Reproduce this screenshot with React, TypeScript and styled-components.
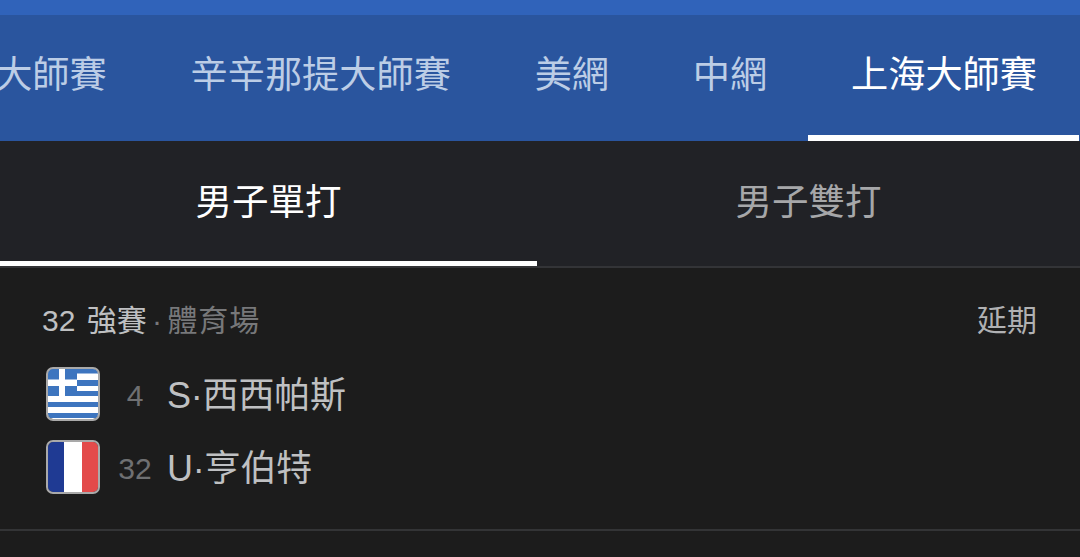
import React from "react";
import styled, { createGlobalStyle } from "styled-components";

const GlobalStyle = createGlobalStyle`
  html, body {
    margin: 0;
    padding: 0;
    background: #1c1c1e;
  }
  body {
    font-family: "Liberation Sans", "Noto Sans CJK TC", sans-serif;
    overflow: hidden;
  }
`;

const Page = styled.div`
  width: 1080px;
  height: 557px;
  overflow: hidden;
  background: #1c1c1c;
`;

const StatusStrip = styled.div`
  height: 15px;
  background: #3063ba;
`;

const TourNav = styled.nav`
  display: flex;
  justify-content: flex-end;
  height: 126px;
  padding-right: 1px;
  background: #2a559e;
  overflow: hidden;
`;

const TourTab = styled.div<{ $active?: boolean }>`
  flex: none;
  height: 126px;
  box-sizing: border-box;
  padding: 2px ${(p) => (p.$active ? "42px" : "40.3px")} 0 43.5px;
  display: flex;
  align-items: center;
  font-size: 37.2px;
  line-height: 1;
  color: ${(p) => (p.$active ? "#ffffff" : "#bccde6")};
  border-bottom: 6px solid ${(p) => (p.$active ? "#ffffff" : "transparent")};
`;

const DrawTabs = styled.div`
  display: grid;
  grid-template-columns: 537px 1fr;
  height: 127px;
  box-sizing: border-box;
  background: #212226;
  border-bottom: 2px solid #333437;
`;

const DrawTab = styled.div<{ $active?: boolean }>`
  height: 125px;
  box-sizing: border-box;
  padding-top: 4px;
  display: flex;
  align-items: center;
  justify-content: center;
  font-size: 36.5px;
  line-height: 1;
  color: ${(p) => (p.$active ? "#ffffff" : "#a6a7a9")};
  border-bottom: 5px solid ${(p) => (p.$active ? "#ffffff" : "transparent")};
`;

const MatchCard = styled.section`
  height: 263px;
  box-sizing: border-box;
  padding: 0 43px 0 42px;
  border-bottom: 2px solid #333436;
`;

const MatchHeader = styled.div`
  display: flex;
  justify-content: space-between;
  align-items: center;
  height: 99px;
  box-sizing: border-box;
  padding-top: 6px;
  font-size: 30px;
  line-height: 1;
`;

const RoundLabel = styled.div`
  color: #bfc0c2;
`;

const RoundCount = styled.span`
  margin-right: 3px;
`;

const Venue = styled.span`
  margin-left: -3px;
  word-spacing: -3px;
  color: #77787a;
`;

const VenueName = styled.span`
  letter-spacing: 0.9px;
`;

const Status = styled.div`
  color: #b0b1b3;
`;

const PlayerRows = styled.div`
  display: flex;
  flex-direction: column;
  gap: 19px;
`;

const PlayerRow = styled.div`
  display: flex;
  align-items: center;
  height: 54px;
  padding-left: 4px;
`;

const FlagFrame = styled.svg`
  flex: none;
  width: 54px;
  height: 54px;
  display: block;
`;

const Seed = styled.span`
  flex: none;
  width: 70px;
  margin: 4px -3px 0 0;
  text-align: center;
  font-size: 30px;
  line-height: 1;
  color: #6f7072;
`;

const PlayerName = styled.span`
  margin-top: 4px;
  font-size: 36px;
  line-height: 1;
  letter-spacing: -0.2px;
  color: #bfc0c2;
`;

const GreeceFlag = () => (
  <FlagFrame viewBox="0 0 54 54">
    <defs>
      <clipPath id="gr-clip">
        <rect x="2" y="2" width="50" height="50" rx="5" />
      </clipPath>
    </defs>
    <g clipPath="url(#gr-clip)">
      <rect width="54" height="54" fill="#fff" />
      <rect y="2" width="54" height="4.5" fill="#3d75bf" />
      <rect y="13" width="54" height="6" fill="#3d75bf" />
      <rect y="24" width="54" height="5" fill="#3d75bf" />
      <rect y="35" width="54" height="5" fill="#3d75bf" />
      <rect y="46" width="54" height="5" fill="#3d75bf" />
      <rect x="2" y="2" width="29" height="27" fill="#3d75bf" />
      <rect x="13" y="2" width="6" height="27" fill="#fff" />
      <rect x="2" y="12.5" width="29" height="6.5" fill="#fff" />
    </g>
    <rect x="1" y="1" width="52" height="52" rx="6" fill="none" stroke="#a9a9a9" strokeWidth="2" />
  </FlagFrame>
);

const FranceFlag = () => (
  <FlagFrame viewBox="0 0 54 54">
    <defs>
      <clipPath id="fr-clip">
        <rect x="2" y="2" width="50" height="50" rx="5" />
      </clipPath>
    </defs>
    <g clipPath="url(#fr-clip)">
      <rect x="2" y="2" width="16" height="50" fill="#1f3a93" />
      <rect x="18" y="2" width="18" height="50" fill="#ffffff" />
      <rect x="36" y="2" width="16" height="50" fill="#e34a4a" />
    </g>
    <rect x="1" y="1" width="52" height="52" rx="6" fill="none" stroke="#a9a9a9" strokeWidth="2" />
  </FlagFrame>
);

const tours = ["大師賽", "辛辛那提大師賽", "美網", "中網", "上海大師賽"];

export default function App() {
  return (
    <Page>
      <GlobalStyle />
      <StatusStrip />
      <TourNav>
        {tours.map((t, i) => (
          <TourTab key={t} $active={i === tours.length - 1}>
            {t}
          </TourTab>
        ))}
      </TourNav>
      <DrawTabs>
        <DrawTab $active>男子單打</DrawTab>
        <DrawTab>男子雙打</DrawTab>
      </DrawTabs>
      <MatchCard>
        <MatchHeader>
          <RoundLabel>
            <RoundCount>32</RoundCount> 強賽{" "}
            <Venue>
              · <VenueName>體育場</VenueName>
            </Venue>
          </RoundLabel>
          <Status>延期</Status>
        </MatchHeader>
        <PlayerRows>
          <PlayerRow>
            <GreeceFlag />
            <Seed>4</Seed>
            <PlayerName>S·西西帕斯</PlayerName>
          </PlayerRow>
          <PlayerRow>
            <FranceFlag />
            <Seed>32</Seed>
            <PlayerName>U·亨伯特</PlayerName>
          </PlayerRow>
        </PlayerRows>
      </MatchCard>
    </Page>
  );
}
